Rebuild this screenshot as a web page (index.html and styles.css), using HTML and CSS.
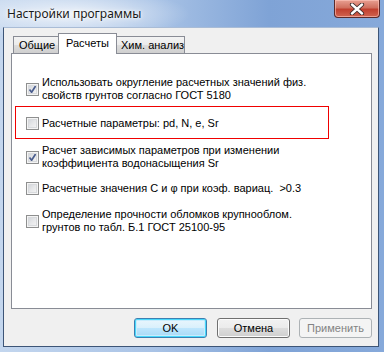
FILE: index.html
```html
<!DOCTYPE html>
<html lang="ru">

<head>
    <meta charset="UTF-8">
    <title>Настройки программы</title>
    <link rel="stylesheet" href="styles.css">
</head>

<body>
    <div class="window">
        <!-- заголовок окна -->
        <div class="titlebar">
            <span class="title">Настройки программы</span>
            <span class="close">
                <svg width="18" height="12" viewBox="0 0 18 12">
                    <path d="M4 1.5 L14 10.5 M14 1.5 L4 10.5" stroke="#3a2a2a" stroke-width="4.2" stroke-linecap="round"/>
                    <path d="M4 1.5 L14 10.5 M14 1.5 L4 10.5" stroke="#ffffff" stroke-width="2.4" stroke-linecap="round"/>
                </svg>
            </span>
        </div>

        <div class="client">
            <div class="tabs">
                <div class="tab">Общие</div>
                <div class="tab active">Расчеты</div>
                <div class="tab">Хим. анализ</div>
            </div>

            <div class="panel">
                <label class="opt">
                    <span class="box checked"></span>
                    <span class="text">Использовать округление расчетных значений физ.<br>свойств грунтов согласно ГОСТ 5180</span>
                </label>

                <div class="marked">
                    <label class="opt">
                        <span class="box"></span>
                        <span class="text">Расчетные параметры: pd, N, e, Sr</span>
                    </label>
                </div>

                <label class="opt opt-3">
                    <span class="box checked"></span>
                    <span class="text">Расчет зависимых параметров при изменении<br>коэффициента водонасыщения Sr</span>
                </label>

                <label class="opt opt-4">
                    <span class="box"></span>
                    <span class="text">Расчетные значения С и φ при коэф. вариац.&nbsp; &gt;0.3</span>
                </label>

                <label class="opt opt-5">
                    <span class="box"></span>
                    <span class="text">Определение прочности обломков крупнооблом.<br>грунтов по табл. Б.1 ГОСТ 25100-95</span>
                </label>
            </div>

            <div class="buttons">
                <button class="btn default">OK</button>
                <button class="btn cancel">Отмена</button>
                <button class="btn" disabled>Применить</button>
            </div>
        </div>
    </div>
</body>

</html>
```

FILE: styles.css
```css
/* общие настройки */
body {
    margin: 0;
    padding: 0;
    font-family: Tahoma, 'Liberation Sans', Arial, sans-serif;
    font-size: 11px;
    color: #000;
}

/* рамка окна */
.window {
    width: 384px;
    height: 352px;
    box-sizing: border-box;
    padding: 0 5px 5px 3px;
    display: flex;
    flex-direction: column;
    background:
        radial-gradient(ellipse 120px 26px at 70px 14px, rgba(255, 255, 255, 0.75), rgba(255, 255, 255, 0) 100%),
        linear-gradient(to right, #c3d6ee 0, #a9c3e6 40%, #7fa3d6 70%, #86a9da 100%);
    background-color: #5f8ccd;
}

.titlebar {
    height: 27px;
    display: flex;
    justify-content: space-between;
    align-items: flex-start;
}

.title {
    font-family: 'Noto Sans', 'Open Sans', sans-serif;
    font-size: 12px;
    line-height: 16px;
    padding: 6px 0 0 4px;
    color: #1a1a1a;
    text-shadow: 0 0 6px #fff, 0 0 3px #fff;
}

.close {
    width: 44px;
    height: 17px;
    margin-right: -1px;
    border: 1px solid #5a2a2a;
    border-top: none;
    border-radius: 0 0 4px 4px;
    background: linear-gradient(to bottom, #e8a092 0, #d0705f 45%, #c1402f 55%, #d06450 100%);
    box-shadow: inset 0 0 0 1px rgba(255, 200, 190, 0.6);
    display: flex;
    justify-content: center;
    align-items: center;
}

/* клиентская область */
.client {
    flex: 1;
    background-color: #f0f0f0;
    border: 1px solid #3d5577;
    border-top-color: #a9bcd6;
    padding: 5px 6px 0 7px;
    display: flex;
    flex-direction: column;
}

/* вкладки */
.tabs {
    display: flex;
    align-items: flex-end;
    padding-left: 2px;
    height: 20px;
    position: relative;
    z-index: 1;
}

.tab {
    height: 17px;
    line-height: 17px;
    box-sizing: border-box;
    border: 1px solid #898c95;
    border-bottom: none;
    background: linear-gradient(to bottom, #f3f3f3 0, #ebebeb 50%, #dddddd 51%, #cfcfcf 100%);
    padding: 0 5px;
    white-space: nowrap;
}

.tab:first-child {
    width: 45px;
    border-right: none;
}

.tab:last-child {
    width: 68px;
    border-left: none;
    padding-left: 4px;
}

.tab.active {
    width: 59px;
    height: 21px;
    line-height: 18px;
    margin-bottom: -1px;
    background: #fff;
    padding: 0 7px;
}

.panel {
    height: 256px;
    box-sizing: border-box;
    background: #fff;
    border: 1px solid #898c95;
    padding: 22px 0 0 0;
    display: flex;
    flex-direction: column;
    align-items: flex-start;
}

/* флажки */
.opt {
    display: flex;
    align-items: center;
    margin-left: 14px;
    line-height: 13px;
}

.text {
    margin-left: 3px;
    white-space: nowrap;
}

.box {
    width: 13px;
    height: 13px;
    box-sizing: border-box;
    border: 1px solid #8e8f8f;
    background: linear-gradient(135deg, #cbcfd5 0, #e6e7e9 50%, #f7f7f7 100%);
    box-shadow: inset 0 0 0 1px #f4f4f4, inset 0 0 0 2px #d8dadd;
    flex-shrink: 0;
}

.box.checked {
    background:
        url("data:image/svg+xml,%3Csvg xmlns='http://www.w3.org/2000/svg' width='11' height='11'%3E%3Cpath d='M2.5 5.5 L4.6 8.2 L8.6 2' fill='none' stroke='%234a5d8e' stroke-width='1.7'/%3E%3C/svg%3E") center no-repeat,
        linear-gradient(135deg, #cbcfd5 0, #e6e7e9 50%, #f7f7f7 100%);
}

.marked {
    margin: 4px 0 0 3px;
    width: 314px;
    height: 33px;
    box-sizing: border-box;
    border: 1px solid #f00000;
    padding-top: 10px;
}

.marked .opt {
    margin-left: 10px;
}

.opt-3 {
    margin-top: 5px;
}

.opt-4 {
    margin-top: 12px;
}

.opt-5 {
    margin-top: 13px;
}

/* кнопки */
.buttons {
    display: flex;
    justify-content: flex-end;
    margin-top: 9px;
}

.btn {
    width: 73px;
    height: 20px;
    margin-left: 9px;
    padding: 0;
    font-family: Tahoma, 'Liberation Sans', Arial, sans-serif;
    font-size: 11px;
    color: #000;
    border: 1px solid #707070;
    border-radius: 3px;
    background: linear-gradient(to bottom, #f2f2f2 0, #ebebeb 50%, #dddddd 51%, #cfcfcf 100%);
    box-shadow: inset 0 0 0 1px #fcfcfc;
}

.btn.cancel {
    margin-left: 10px;
}

.btn.default {
    border-color: #3c7fb1;
    background: linear-gradient(to bottom, #eaf6fd 0, #d9f0fc 50%, #bee6fd 51%, #a7d9f5 100%);
    box-shadow: inset 0 0 0 1px #48d8fb, inset 0 0 0 2px #c8ecfd;
}

.btn:disabled {
    color: #838383;
    border-color: #adb2b5;
    background: #f4f4f4;
    box-shadow: none;
}
```
